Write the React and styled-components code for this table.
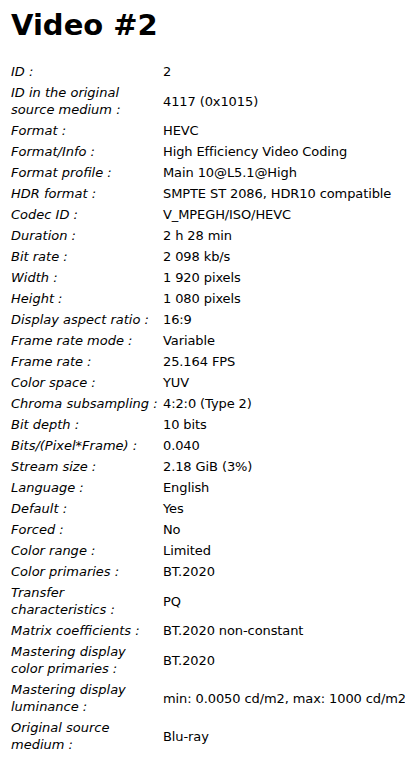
import React from "react";
import styled, { createGlobalStyle } from "styled-components";

const rows = [
  ["ID :", "2"],
  ["ID in the original source medium :", "4117 (0x1015)"],
  ["Format :", "HEVC"],
  ["Format/Info :", "High Efficiency Video Coding"],
  ["Format profile :", "Main 10@L5.1@High"],
  ["HDR format :", "SMPTE ST 2086, HDR10 compatible"],
  ["Codec ID :", "V_MPEGH/ISO/HEVC"],
  ["Duration :", "2 h 28 min"],
  ["Bit rate :", "2 098 kb/s"],
  ["Width :", "1 920 pixels"],
  ["Height :", "1 080 pixels"],
  ["Display aspect ratio :", "16:9"],
  ["Frame rate mode :", "Variable"],
  ["Frame rate :", "25.164 FPS"],
  ["Color space :", "YUV"],
  ["Chroma subsampling :", "4:2:0 (Type 2)"],
  ["Bit depth :", "10 bits"],
  ["Bits/(Pixel*Frame) :", "0.040"],
  ["Stream size :", "2.18 GiB (3%)"],
  ["Language :", "English"],
  ["Default :", "Yes"],
  ["Forced :", "No"],
  ["Color range :", "Limited"],
  ["Color primaries :", "BT.2020"],
  ["Transfer characteristics :", "PQ"],
  ["Matrix coefficients :", "BT.2020 non-constant"],
  ["Mastering display color primaries :", "BT.2020"],
  ["Mastering display luminance :", "min: 0.0050 cd/m2, max: 1000 cd/m2"],
  ["Original source medium :", "Blu-ray"],
];

const Global = createGlobalStyle`
  body {
    margin: 8px;
    background: #fff;
    color: #000;
    font-family: "DejaVu Sans", sans-serif;
  }
`;

const Title = styled.h1`
  font-size: 29px;
  font-weight: bold;
  margin: 0 0 19px 3px;
  line-height: 34px;
`;

const Table = styled.table`
  table-layout: fixed;
  width: 397px;
  border-spacing: 0;
  border-collapse: separate;
  font-size: 13px;
  line-height: 17px;
`;

const LabelCol = styled.col`
  width: 151px;
`;

const Label = styled.td`
  font-style: italic;
  padding: 2px 0 2px 3px;
  vertical-align: middle;
`;

const Value = styled.td`
  padding: 2px 0 2px 4px;
  vertical-align: middle;
  white-space: nowrap;
  letter-spacing: -0.1px;
`;

export default function App() {
  return (
    <>
      <Global />
      <Title>Video #2</Title>
      <Table>
        <colgroup>
          <LabelCol />
          <col />
        </colgroup>
        <tbody>
          {rows.map(([k, v]) => (
            <tr key={k}>
              <Label>{k}</Label>
              <Value>{v}</Value>
            </tr>
          ))}
        </tbody>
      </Table>
    </>
  );
}
